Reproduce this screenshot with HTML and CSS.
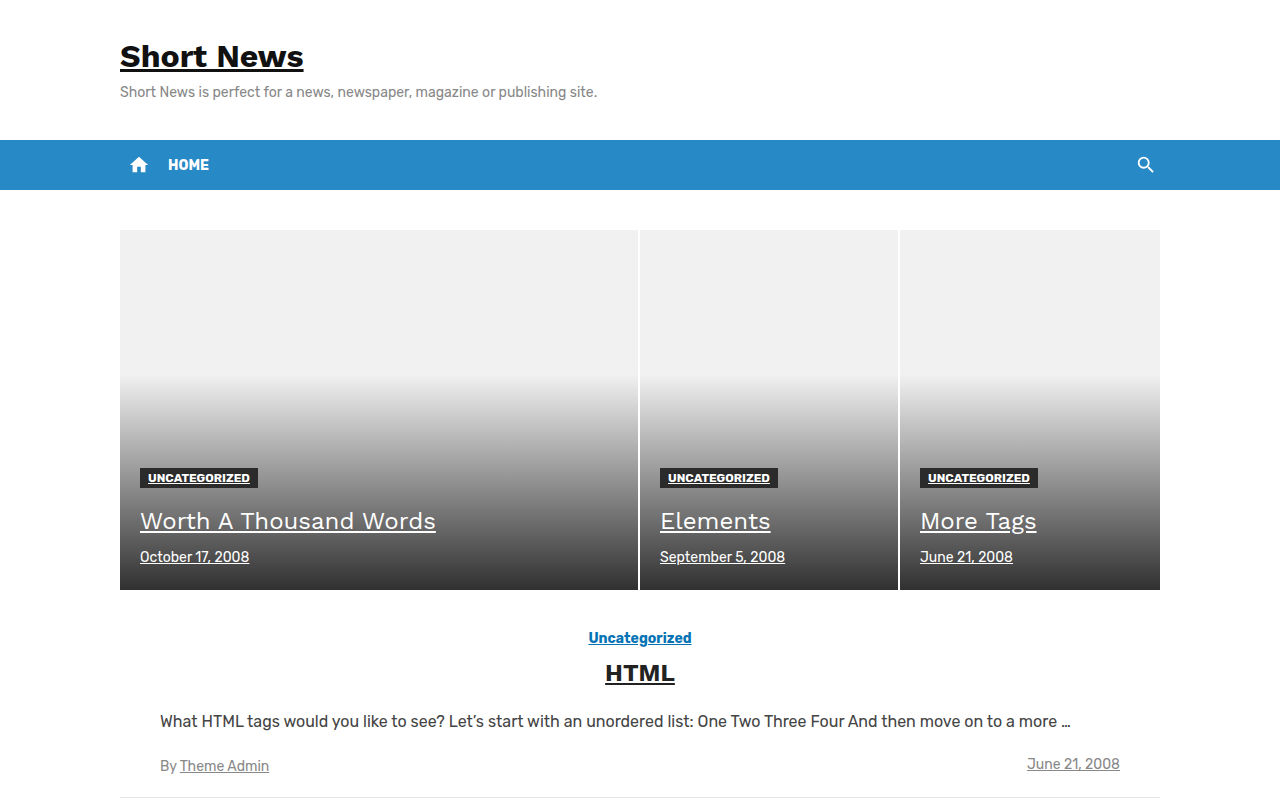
FILE: index.html
```html
<!DOCTYPE html>
<html lang="en">
<head>
    <meta charset="UTF-8">
    <meta name="viewport" content="width=device-width, initial-scale=1.0">
    <title>Short News</title>
    <link rel="stylesheet" href="styles.css">
</head>
<body>
    <header class="site-header">
        <div class="container">
            <h1 class="site-title"><a href="#">Short News</a></h1>
            <p class="site-description">Short News is perfect for a news, newspaper, magazine or publishing site.</p>
        </div>
    </header>

    <nav class="main-navbar" aria-label="Main menu">
        <div class="container navbar-inner">
            <a class="home-link" href="#" aria-label="Front page">
                <svg class="icon" viewBox="0 0 24 24" aria-hidden="true"><path d="M10 20v-6h4v6h5v-8h3L12 3 2 12h3v8z"/></svg>
            </a>
            <a class="menu-link" href="#">HOME</a>
            <button class="search-button" type="button" aria-label="Search">
                <svg class="icon" viewBox="0 0 24 24" aria-hidden="true"><path d="M15.5 14h-.79l-.28-.27A6.47 6.47 0 0 0 16 9.5 6.5 6.5 0 1 0 9.5 16c1.61 0 3.09-.59 4.23-1.57l.27.28v.79l5 4.99L20.49 19l-4.99-5zm-6 0C7.01 14 5 11.99 5 9.5S7.01 5 9.5 5 14 7.01 14 9.5 11.99 14 9.5 14z"/></svg>
            </button>
        </div>
    </nav>

    <main class="container site-content">
        <section class="featured-posts">
            <article class="featured-post">
                <div class="featured-content">
                    <a class="featured-category" href="#">UNCATEGORIZED</a>
                    <h2 class="featured-title"><a href="#">Worth A Thousand Words</a></h2>
                    <a class="featured-date" href="#">October 17, 2008</a>
                </div>
            </article>
            <article class="featured-post">
                <div class="featured-content">
                    <a class="featured-category" href="#">UNCATEGORIZED</a>
                    <h2 class="featured-title"><a href="#">Elements</a></h2>
                    <a class="featured-date" href="#">September 5, 2008</a>
                </div>
            </article>
            <article class="featured-post">
                <div class="featured-content">
                    <a class="featured-category" href="#">UNCATEGORIZED</a>
                    <h2 class="featured-title"><a href="#">More Tags</a></h2>
                    <a class="featured-date" href="#">June 21, 2008</a>
                </div>
            </article>
        </section>

        <article class="post">
            <header class="entry-header">
                <a class="entry-category" href="#">Uncategorized</a>
                <h2 class="entry-title"><a href="#">HTML</a></h2>
            </header>
            <p class="entry-summary">What HTML tags would you like to see? Let’s start with an unordered list: One Two Three Four And then move on to a more …</p>
            <footer class="entry-footer">
                <span class="entry-author">By <a href="#">Theme Admin</a></span>
                <a class="entry-date" href="#">June 21, 2008</a>
            </footer>
        </article>
    </main>
</body>
</html>
```
FILE: styles.css
```css
* {
    box-sizing: border-box;
}

body {
    margin: 0;
    background: #fff;
    color: #444;
    font-family: Rubik, Roboto, sans-serif;
    font-size: 16px;
    line-height: 24px;
}

h1, h2, p {
    margin: 0;
}

a {
    color: inherit;
}

.container {
    max-width: 1120px;
    margin: 0 auto;
    padding: 0 40px;
}

/* Header */
.site-header {
    padding: 36px 0 35px;
}

.site-title {
    color: #111;
    font-family: "Work Sans", Inter, sans-serif;
    font-size: 32px;
    font-weight: 700;
    line-height: 40px;
    margin-bottom: 4px;
}

.site-description {
    color: #888;
    font-size: 14px;
    line-height: 25px;
}

/* Navigation */
.main-navbar {
    background: #2789c5;
    color: #fff;
}

.navbar-inner {
    display: flex;
    align-items: center;
    height: 50px;
}

.icon {
    display: block;
    width: 22px;
    height: 22px;
    fill: currentColor;
}

.home-link {
    padding: 0 8px;
}

.menu-link {
    padding: 0 10px;
    font-size: 14px;
    font-weight: 700;
    line-height: 25px;
    text-decoration: none;
}

.search-button {
    margin-left: auto;
    padding: 3px;
    border: none;
    background: none;
    color: inherit;
    cursor: pointer;
}

/* Featured posts */
.site-content {
    padding-top: 40px;
}

.featured-posts {
    display: grid;
    grid-template-columns: 2fr 1fr 1fr;
}

.featured-post {
    display: flex;
    min-height: 360px;
    background: linear-gradient(rgba(0, 0, 0, 0) 40%, rgba(0, 0, 0, 0.8)) #f1f1f1;
    color: #fff;
}

.featured-post:not(:last-child) {
    margin-right: 2px;
}

.featured-content {
    display: flex;
    flex-direction: column;
    align-items: flex-start;
    justify-content: flex-end;
    padding: 20px;
}

.featured-category {
    padding: 0 8px;
    background: #2b2b2b;
    font-size: 12px;
    font-weight: 700;
    line-height: 20px;
}

.featured-title {
    margin: 18px 0 9px;
    font-family: "Work Sans", Inter, sans-serif;
    font-size: 24px;
    font-weight: 400;
    line-height: 30px;
}

.featured-date {
    font-size: 14px;
    line-height: 25px;
}

/* Post list */
.post {
    padding: 36px 40px 16px;
    border-bottom: 1px solid #e6e6e6;
}

.entry-header {
    text-align: center;
}

.entry-category {
    color: #0573b4;
    font-size: 14px;
    font-weight: 700;
}

.entry-title {
    margin: 7px 0 22px;
    color: #222;
    font-family: "Work Sans", Inter, sans-serif;
    font-size: 24px;
    font-weight: 700;
    line-height: 30px;
}

.entry-footer {
    display: flex;
    justify-content: space-between;
    margin-top: 19px;
    color: #888;
    font-size: 14px;
}

.entry-author {
    line-height: 28px;
}
```
